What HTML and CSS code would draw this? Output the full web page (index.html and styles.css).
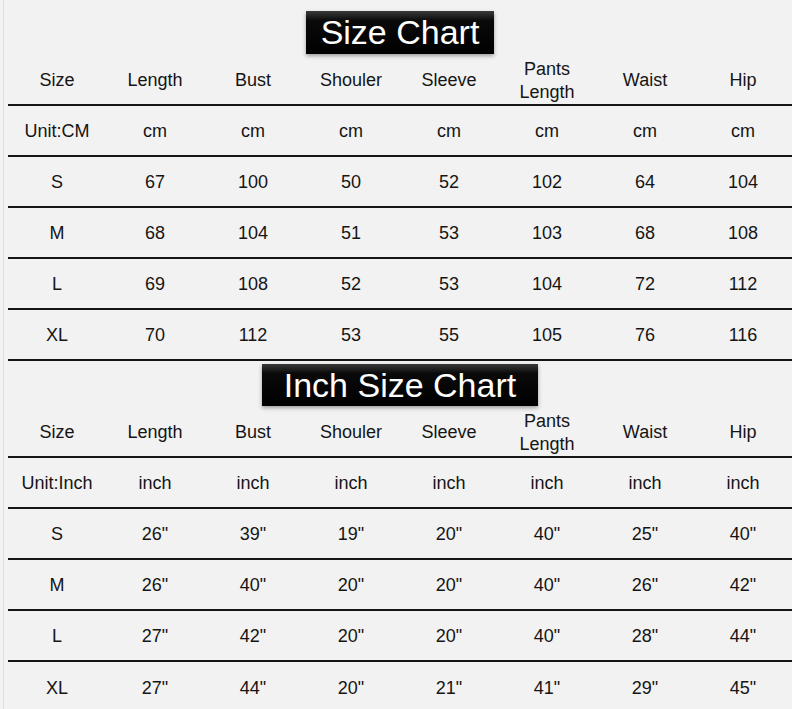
FILE: index.html
```html
<!DOCTYPE html>
<html>
<head>
<meta charset="utf-8">
<link rel="stylesheet" href="styles.css">
</head>
<body>
<div class="page">
  <div class="title-wrap title-wrap--top"><div class="title title--cm">Size Chart</div></div>
  <div class="row head">
    <div>Size</div><div>Length</div><div>Bust</div><div>Shouler</div><div>Sleeve</div><div class="two">Pants<br>Length</div><div>Waist</div><div>Hip</div>
  </div>
  <div class="row"><div>Unit:CM</div><div>cm</div><div>cm</div><div>cm</div><div>cm</div><div>cm</div><div>cm</div><div>cm</div></div>
  <div class="row"><div>S</div><div>67</div><div>100</div><div>50</div><div>52</div><div>102</div><div>64</div><div>104</div></div>
  <div class="row"><div>M</div><div>68</div><div>104</div><div>51</div><div>53</div><div>103</div><div>68</div><div>108</div></div>
  <div class="row"><div>L</div><div>69</div><div>108</div><div>52</div><div>53</div><div>104</div><div>72</div><div>112</div></div>
  <div class="row"><div>XL</div><div>70</div><div>112</div><div>53</div><div>55</div><div>105</div><div>76</div><div>116</div></div>

  <div class="title-wrap title-wrap--inch"><div class="title title--inch">Inch Size Chart</div></div>
  <div class="row head">
    <div>Size</div><div>Length</div><div>Bust</div><div>Shouler</div><div>Sleeve</div><div class="two">Pants<br>Length</div><div>Waist</div><div>Hip</div>
  </div>
  <div class="row"><div>Unit:Inch</div><div>inch</div><div>inch</div><div>inch</div><div>inch</div><div>inch</div><div>inch</div><div>inch</div></div>
  <div class="row"><div>S</div><div>26"</div><div>39"</div><div>19"</div><div>20"</div><div>40"</div><div>25"</div><div>40"</div></div>
  <div class="row"><div>M</div><div>26"</div><div>40"</div><div>20"</div><div>20"</div><div>40"</div><div>26"</div><div>42"</div></div>
  <div class="row"><div>L</div><div>27"</div><div>42"</div><div>20"</div><div>20"</div><div>40"</div><div>28"</div><div>44"</div></div>
  <div class="row last"><div>XL</div><div>27"</div><div>44"</div><div>20"</div><div>21"</div><div>41"</div><div>29"</div><div>45"</div></div>
</div>
</body>
</html>
```
FILE: styles.css
```css
html, body {
  margin: 0;
  padding: 0;
  background: #f2f2f2;
  overflow: hidden;
}
body {
  font-family: "Liberation Sans", Arial, sans-serif;
  color: #151515;
  width: 792px;
  height: 709px;
}
.page {
  margin-left: 3px;
  border-left: 1px solid #dedede;
  padding-left: 4px;
  min-height: 709px;
  box-sizing: border-box;
}
.title-wrap {
  display: flex;
  justify-content: center;
  align-items: flex-start;
  box-sizing: border-box;
}
.title-wrap--top {
  height: 55px;
  padding-top: 11px;
}
.title-wrap--inch {
  height: 46px;
  padding-top: 3px;
}
.title {
  height: 43px;
  box-sizing: border-box;
  background: linear-gradient(#3a3a3a 0%, #0a0a0a 22%, #000 100%);
  color: #fff;
  font-size: 34px;
  line-height: 43px;
  box-shadow: 0 2px 4px rgba(0,0,0,0.35);
  white-space: nowrap;
}
.title--cm { padding: 0 15px; }
.title--inch { padding: 0 22px; height: 42px; line-height: 42px; }
.row {
  display: grid;
  grid-template-columns: repeat(8, 98px);
  height: 51px;
  padding-top: 2px;
  box-sizing: border-box;
  border-bottom: 2px solid #151515;
  font-size: 18px;
  align-items: center;
  justify-items: center;
  text-align: center;
}
.row.last { border-bottom: none; }
.head .two { line-height: 23px; }
```
